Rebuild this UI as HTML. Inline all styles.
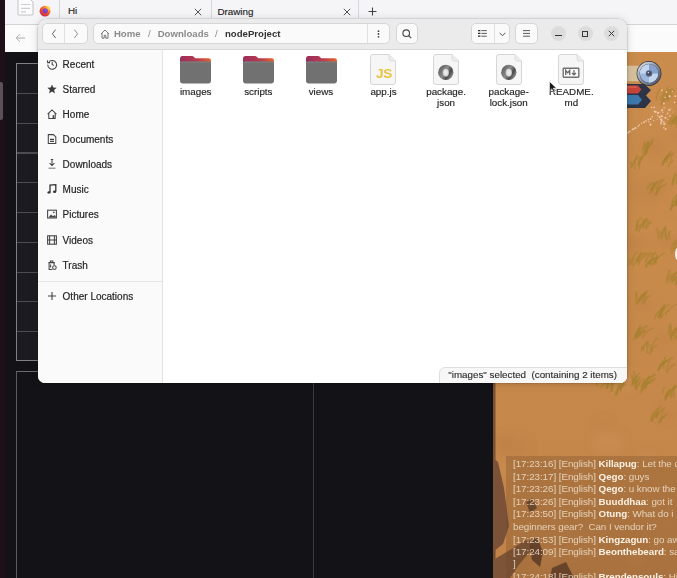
<!DOCTYPE html>
<html><head><meta charset="utf-8">
<style>
*{margin:0;padding:0;box-sizing:border-box}
html,body{width:677px;height:578px;overflow:hidden;background:#131317;font-family:"Liberation Sans",sans-serif;position:relative}
.a{position:absolute}
svg{position:absolute;overflow:visible}
#dock{left:0;top:0;width:5px;height:578px;background:#1e1018}
#tabbar{left:5px;top:0;width:672px;height:25.2px;background:#f5f5f7;border-bottom:1.2px solid #d4d4d8}
#toolbar{left:5px;top:25.2px;width:672px;height:26.6px;background:#fbfbfc}
#page{left:5px;top:52px;width:488px;height:526px;background:#131317}
#grid{left:15.6px;top:63px;width:400px;height:297.5px;background:#1b1b21;border:1.4px solid #808086}
.gl{left:0;width:100%;height:1.2px;background:#4c4c52}
#lowbox{left:15.6px;top:371px;width:500px;height:300px;border-left:1.2px solid #5a5a60;border-top:1.2px solid #6a6a70}
#vline{left:313px;top:371px;width:1px;height:207px;background:#3a3a40}
#game{left:493px;top:52px;width:184px;height:526px;background:#c6884b;overflow:hidden}
.tabtxt{font-size:9.8px;color:#1f1f1f;-webkit-text-stroke:.15px #1f1f1f;line-height:12px;white-space:nowrap}
#win{left:37.5px;top:18.7px;width:589px;height:364px;border-radius:9px 9px 7px 7px;overflow:hidden;background:#fff;box-shadow:0 0 10px rgba(0,0,0,.13),0 1px 4px rgba(0,0,0,.12),0 0 0 .6px rgba(0,0,0,.12)}
#hdr{left:0;top:0;width:589px;height:31px;background:#ebebeb;border-bottom:1px solid #d8d8d8}
#side{left:0;top:31px;width:125.2px;height:333px;background:#fafafa;border-right:1px solid #e2e2e2}
.btn{background:#fafafa;border:1px solid #d6d6d6;border-radius:5px}
.si{left:25.1px;font-size:10px;color:#242424;-webkit-text-stroke:.18px #242424;white-space:nowrap;line-height:12px}
.lbl{font-size:9.8px;color:#1e1e1e;-webkit-text-stroke:.15px #1e1e1e;text-align:center;line-height:11px;width:70px;white-space:nowrap}
.chat{left:513px;font-size:9.8px;color:rgba(238,226,206,.85);white-space:nowrap;line-height:12px;letter-spacing:-.05px}
.chat b{color:rgba(255,248,236,.95)}
.circ{width:15px;height:15px;border-radius:50%;background:#dcdcdc;top:7.5px}
</style></head><body>
<div id="dock" class="a"></div>
<div class="a" style="left:0;top:82px;width:2.5px;height:38px;background:#5a5058;border-radius:0 2px 2px 0"></div>
<div id="tabbar" class="a"></div>
<div id="toolbar" class="a"></div>
<div id="page" class="a"></div>
<div id="grid" class="a">
  <div class="a gl" style="top:28.8px"></div>
  <div class="a gl" style="top:58.6px"></div>
  <div class="a gl" style="top:88.4px"></div>
  <div class="a gl" style="top:118.2px"></div>
  <div class="a gl" style="top:148px"></div>
  <div class="a gl" style="top:177.8px"></div>
  <div class="a gl" style="top:207.5px"></div>
  <div class="a gl" style="top:237.2px"></div>
  <div class="a gl" style="top:266.6px"></div>
</div>
<div id="lowbox" class="a"></div>
<div id="vline" class="a"></div>

<!-- browser tab bar content -->
<svg style="left:17px;top:-3px" width="17" height="19" viewBox="0 0 17 19">
  <path d="M1 1 H12 L16 5 V17.5 Q16 18 15.5 18 H1.5 Q1 18 1 17.5 Z" fill="#fbfbfb" stroke="#c2c2c6" stroke-width="1"/>
  <path d="M4 7.5 H13 M4 11.3 H13 M4 14.8 H9" stroke="#cdcdd1" stroke-width="1.2"/>
</svg>
<svg style="left:39px;top:5.2px" width="12" height="12" viewBox="0 0 12 12">
  <defs><radialGradient id="ffx" cx=".75" cy=".2" r=".9"><stop offset="0" stop-color="#ffd23a"/><stop offset=".35" stop-color="#ff8a2a"/><stop offset=".7" stop-color="#e8432f"/><stop offset="1" stop-color="#c82a5a"/></radialGradient></defs>
  <circle cx="6" cy="6.2" r="5.4" fill="url(#ffx)"/>
  <path d="M8.6 0.6 Q11.6 2.6 11.2 5.2 L9 4 Z" fill="#ffcf40" opacity=".9"/>
  <circle cx="6.3" cy="5.8" r="2.6" fill="#7a3cc0"/>
  <circle cx="6.8" cy="5.2" r="1.3" fill="#9a58d8" opacity=".8"/>
</svg>
<div class="a" style="left:59px;top:0;width:1px;height:18px;background:#d6d6da"></div>
<div class="a tabtxt" style="left:68px;top:5.3px">Hi</div>
<svg style="left:194px;top:7.5px" width="8" height="8" viewBox="0 0 8 8"><path d="M0.8 0.8 L7.2 7.2 M7.2 0.8 L0.8 7.2" stroke="#555" stroke-width="1"/></svg>
<div class="a" style="left:211px;top:0;width:1px;height:18px;background:#d6d6da"></div>
<div class="a tabtxt" style="left:217.4px;top:5.8px">Drawing</div>
<svg style="left:343px;top:7.5px" width="8" height="8" viewBox="0 0 8 8"><path d="M0.8 0.8 L7.2 7.2 M7.2 0.8 L0.8 7.2" stroke="#555" stroke-width="1"/></svg>
<div class="a" style="left:358px;top:0;width:1px;height:18px;background:#d6d6da"></div>
<svg style="left:368px;top:6.5px" width="9" height="9" viewBox="0 0 9 9"><path d="M4.5 0.5 V8.5 M0.5 4.5 H8.5" stroke="#444" stroke-width="1.1"/></svg>
<svg style="left:15px;top:33px" width="11" height="10" viewBox="0 0 11 10"><path d="M10 5 H1.5 M5 1.2 L1.2 5 L5 8.8" fill="none" stroke="#a4a4a8" stroke-width=".9"/></svg>

<!-- game -->
<svg style="left:493px;top:52px;overflow:hidden" width="184" height="526" viewBox="493 52 184 526">
  <defs>
    <linearGradient id="gbg" x1="0" y1="0" x2="0" y2="1"><stop offset="0" stop-color="#c98c4d"/><stop offset=".5" stop-color="#c88a4b"/><stop offset="1" stop-color="#c3844a"/></linearGradient>
    <radialGradient id="cmp" cx=".45" cy=".4" r=".6"><stop offset="0" stop-color="#c4d6f0"/><stop offset="1" stop-color="#7c9cc8"/></radialGradient>
    <filter id="bl"><feGaussianBlur stdDeviation=".6"/></filter><filter id="bl2" x="-50%" y="-50%" width="200%" height="200%"><feGaussianBlur stdDeviation="5"/></filter>
  </defs>
  <rect x="493" y="52" width="184" height="526" fill="url(#gbg)"/>
  <g filter="url(#bl2)"><ellipse cx="608" cy="442" rx="16" ry="9" fill="#d29658" opacity=".35"/><ellipse cx="648" cy="460" rx="9" ry="5" fill="#d29658" opacity=".35"/><ellipse cx="659" cy="112" rx="12" ry="7" fill="#d29658" opacity=".35"/><ellipse cx="563" cy="106" rx="9" ry="5" fill="#d29658" opacity=".35"/><ellipse cx="568" cy="148" rx="16" ry="10" fill="#bb7c44" opacity=".35"/><ellipse cx="522" cy="471" rx="8" ry="5" fill="#bb7c44" opacity=".35"/><ellipse cx="516" cy="53" rx="16" ry="10" fill="#d29658" opacity=".35"/><ellipse cx="635" cy="557" rx="8" ry="5" fill="#d29658" opacity=".35"/><ellipse cx="546" cy="558" rx="12" ry="7" fill="#d29658" opacity=".35"/><ellipse cx="526" cy="561" rx="8" ry="5" fill="#bb7c44" opacity=".35"/><ellipse cx="548" cy="242" rx="8" ry="5" fill="#d29658" opacity=".35"/><ellipse cx="542" cy="227" rx="16" ry="9" fill="#d29658" opacity=".35"/><ellipse cx="603" cy="424" rx="7" ry="4" fill="#bb7c44" opacity=".35"/><ellipse cx="644" cy="305" rx="10" ry="6" fill="#bb7c44" opacity=".35"/><ellipse cx="580" cy="145" rx="9" ry="5" fill="#d29658" opacity=".35"/><ellipse cx="668" cy="240" rx="11" ry="7" fill="#bb7c44" opacity=".35"/><ellipse cx="560" cy="356" rx="6" ry="4" fill="#d29658" opacity=".35"/><ellipse cx="623" cy="380" rx="17" ry="10" fill="#d29658" opacity=".35"/><ellipse cx="632" cy="541" rx="17" ry="10" fill="#bb7c44" opacity=".35"/><ellipse cx="587" cy="522" rx="9" ry="5" fill="#bb7c44" opacity=".35"/><ellipse cx="513" cy="446" rx="16" ry="9" fill="#bb7c44" opacity=".35"/><ellipse cx="500" cy="549" rx="7" ry="4" fill="#bb7c44" opacity=".35"/><ellipse cx="587" cy="243" rx="8" ry="5" fill="#bb7c44" opacity=".35"/><ellipse cx="663" cy="339" rx="10" ry="6" fill="#bb7c44" opacity=".35"/><ellipse cx="549" cy="472" rx="14" ry="8" fill="#bb7c44" opacity=".35"/><ellipse cx="676" cy="137" rx="7" ry="4" fill="#bb7c44" opacity=".35"/><ellipse cx="499" cy="442" rx="10" ry="6" fill="#bb7c44" opacity=".35"/><ellipse cx="577" cy="274" rx="7" ry="4" fill="#d29658" opacity=".35"/><ellipse cx="641" cy="228" rx="8" ry="5" fill="#d29658" opacity=".35"/><ellipse cx="609" cy="466" rx="7" ry="4" fill="#bb7c44" opacity=".35"/><ellipse cx="562" cy="83" rx="11" ry="7" fill="#d29658" opacity=".35"/><ellipse cx="576" cy="578" rx="16" ry="10" fill="#bb7c44" opacity=".35"/><ellipse cx="670" cy="414" rx="10" ry="6" fill="#bb7c44" opacity=".35"/><ellipse cx="547" cy="264" rx="8" ry="5" fill="#bb7c44" opacity=".35"/><ellipse cx="644" cy="332" rx="8" ry="5" fill="#bb7c44" opacity=".35"/><ellipse cx="653" cy="147" rx="12" ry="7" fill="#bb7c44" opacity=".35"/><ellipse cx="505" cy="470" rx="10" ry="6" fill="#d29658" opacity=".35"/><ellipse cx="633" cy="243" rx="14" ry="9" fill="#bb7c44" opacity=".35"/><ellipse cx="647" cy="191" rx="18" ry="11" fill="#bb7c44" opacity=".35"/><ellipse cx="669" cy="231" rx="8" ry="5" fill="#d29658" opacity=".35"/></g>
  <g filter="url(#bl)"><path d="M661.0 100.0 Q662.6 93.4 671.9 89.1" stroke="#a6822f" stroke-width="1.7" fill="none" stroke-linecap="round" opacity=".55"/><path d="M667.6 99.3 Q668.6 94.1 674.3 90.6" stroke="#a6822f" stroke-width="1.2" fill="none" stroke-linecap="round" opacity=".55"/><path d="M667.2 101.0 Q667.9 97.4 671.6 95.0" stroke="#a6822f" stroke-width="2.1" fill="none" stroke-linecap="round" opacity=".55"/><path d="M664.3 101.1 Q665.7 93.9 673.4 89.1" stroke="#a6822f" stroke-width="1.6" fill="none" stroke-linecap="round" opacity=".55"/><path d="M661.3 104.7 Q662.2 99.4 667.2 95.9" stroke="#a6822f" stroke-width="1.8" fill="none" stroke-linecap="round" opacity=".55"/><path d="M667.3 98.2 Q667.3 92.1 667.3 88.0" stroke="#a6822f" stroke-width="2.0" fill="none" stroke-linecap="round" opacity=".55"/><path d="M656.2 99.1 Q656.8 93.1 659.8 89.0" stroke="#a6822f" stroke-width="1.4" fill="none" stroke-linecap="round" opacity=".55"/><path d="M664.0 101.3 Q664.0 94.8 663.9 90.5" stroke="#a6822f" stroke-width="1.4" fill="none" stroke-linecap="round" opacity=".55"/><path d="M668.9 123.9 Q669.7 118.6 674.4 115.0" stroke="#a6822f" stroke-width="1.5" fill="none" stroke-linecap="round" opacity=".55"/><path d="M669.8 123.8 Q671.1 119.5 678.5 116.7" stroke="#a6822f" stroke-width="1.7" fill="none" stroke-linecap="round" opacity=".55"/><path d="M671.8 123.4 Q673.0 119.3 679.4 116.5" stroke="#a6822f" stroke-width="1.4" fill="none" stroke-linecap="round" opacity=".55"/><path d="M676.6 126.9 Q676.8 123.9 678.0 121.9" stroke="#a6822f" stroke-width="1.8" fill="none" stroke-linecap="round" opacity=".55"/><path d="M674.3 124.0 Q675.6 119.7 683.5 116.8" stroke="#a6822f" stroke-width="1.3" fill="none" stroke-linecap="round" opacity=".55"/><path d="M676.0 124.4 Q676.9 117.9 682.1 113.5" stroke="#a6822f" stroke-width="2.0" fill="none" stroke-linecap="round" opacity=".55"/><path d="M679.2 121.7 Q680.3 118.0 686.6 115.5" stroke="#a6822f" stroke-width="1.4" fill="none" stroke-linecap="round" opacity=".55"/><path d="M673.1 121.1 Q673.7 118.0 677.2 115.9" stroke="#a6822f" stroke-width="1.9" fill="none" stroke-linecap="round" opacity=".55"/><path d="M670.9 126.4 Q671.8 122.7 677.1 120.3" stroke="#a6822f" stroke-width="1.2" fill="none" stroke-linecap="round" opacity=".55"/><path d="M672.2 123.5 Q673.9 117.7 684.0 113.9" stroke="#a6822f" stroke-width="1.4" fill="none" stroke-linecap="round" opacity=".55"/><path d="M674.7 123.1 Q675.9 118.4 682.7 115.2" stroke="#a6822f" stroke-width="1.3" fill="none" stroke-linecap="round" opacity=".55"/><path d="M645.1 150.0 Q645.0 145.3 644.4 142.1" stroke="#a6822f" stroke-width="1.3" fill="none" stroke-linecap="round" opacity=".55"/><path d="M646.1 154.3 Q647.0 147.2 652.6 142.4" stroke="#a6822f" stroke-width="1.7" fill="none" stroke-linecap="round" opacity=".55"/><path d="M645.0 154.7 Q645.7 149.5 649.6 146.0" stroke="#a6822f" stroke-width="1.2" fill="none" stroke-linecap="round" opacity=".55"/><path d="M644.5 153.9 Q645.6 147.5 651.9 143.3" stroke="#a6822f" stroke-width="1.8" fill="none" stroke-linecap="round" opacity=".55"/><path d="M647.1 152.1 Q647.2 145.5 647.8 141.1" stroke="#a6822f" stroke-width="1.7" fill="none" stroke-linecap="round" opacity=".55"/><path d="M645.3 153.4 Q645.7 150.3 647.7 148.3" stroke="#a6822f" stroke-width="2.2" fill="none" stroke-linecap="round" opacity=".55"/><path d="M642.3 152.2 Q643.2 146.5 648.6 142.6" stroke="#a6822f" stroke-width="1.8" fill="none" stroke-linecap="round" opacity=".55"/><path d="M645.1 150.8 Q646.4 143.8 653.5 139.1" stroke="#a6822f" stroke-width="1.3" fill="none" stroke-linecap="round" opacity=".55"/><path d="M643.1 148.7 Q643.3 145.6 644.3 143.5" stroke="#a6822f" stroke-width="1.3" fill="none" stroke-linecap="round" opacity=".55"/><path d="M663.5 163.8 Q664.1 159.4 667.7 156.5" stroke="#a6822f" stroke-width="1.4" fill="none" stroke-linecap="round" opacity=".55"/><path d="M664.0 161.3 Q664.9 156.7 670.2 153.6" stroke="#a6822f" stroke-width="1.8" fill="none" stroke-linecap="round" opacity=".55"/><path d="M662.6 165.0 Q664.0 158.3 672.3 153.9" stroke="#a6822f" stroke-width="2.0" fill="none" stroke-linecap="round" opacity=".55"/><path d="M662.1 163.2 Q662.8 160.0 666.8 157.8" stroke="#a6822f" stroke-width="1.4" fill="none" stroke-linecap="round" opacity=".55"/><path d="M670.5 161.8 Q671.1 155.8 674.2 151.9" stroke="#a6822f" stroke-width="1.2" fill="none" stroke-linecap="round" opacity=".55"/><path d="M666.7 162.2 Q667.3 155.4 670.6 150.9" stroke="#a6822f" stroke-width="1.7" fill="none" stroke-linecap="round" opacity=".55"/><path d="M668.6 166.6 Q669.2 163.2 672.5 160.9" stroke="#a6822f" stroke-width="1.7" fill="none" stroke-linecap="round" opacity=".55"/><path d="M649.7 192.9 Q650.8 187.7 656.7 184.2" stroke="#a6822f" stroke-width="1.3" fill="none" stroke-linecap="round" opacity=".55"/><path d="M655.8 194.8 Q656.4 190.3 659.8 187.4" stroke="#a6822f" stroke-width="2.2" fill="none" stroke-linecap="round" opacity=".55"/><path d="M647.3 188.5 Q648.2 185.2 653.2 183.0" stroke="#a6822f" stroke-width="2.0" fill="none" stroke-linecap="round" opacity=".55"/><path d="M651.4 192.3 Q652.1 189.3 656.0 187.2" stroke="#a6822f" stroke-width="1.6" fill="none" stroke-linecap="round" opacity=".55"/><path d="M652.2 190.7 Q652.7 186.0 655.6 182.9" stroke="#a6822f" stroke-width="1.2" fill="none" stroke-linecap="round" opacity=".55"/><path d="M651.2 189.7 Q652.8 183.8 662.0 179.8" stroke="#a6822f" stroke-width="1.9" fill="none" stroke-linecap="round" opacity=".55"/><path d="M651.5 189.7 Q652.3 185.0 657.0 182.0" stroke="#a6822f" stroke-width="1.8" fill="none" stroke-linecap="round" opacity=".55"/><path d="M657.6 188.6 Q658.5 183.6 663.6 180.2" stroke="#a6822f" stroke-width="1.9" fill="none" stroke-linecap="round" opacity=".55"/><path d="M656.7 193.5 Q658.1 187.8 666.2 184.1" stroke="#a6822f" stroke-width="1.9" fill="none" stroke-linecap="round" opacity=".55"/><path d="M676.2 204.7 Q677.0 197.9 681.6 193.3" stroke="#a6822f" stroke-width="1.8" fill="none" stroke-linecap="round" opacity=".55"/><path d="M677.9 209.7 Q678.0 202.6 678.6 197.8" stroke="#a6822f" stroke-width="1.5" fill="none" stroke-linecap="round" opacity=".55"/><path d="M671.7 205.7 Q672.3 202.1 675.7 199.7" stroke="#a6822f" stroke-width="1.3" fill="none" stroke-linecap="round" opacity=".55"/><path d="M671.6 209.6 Q672.5 203.5 677.3 199.4" stroke="#a6822f" stroke-width="1.3" fill="none" stroke-linecap="round" opacity=".55"/><path d="M679.5 207.9 Q679.9 204.1 682.2 201.5" stroke="#a6822f" stroke-width="1.8" fill="none" stroke-linecap="round" opacity=".55"/><path d="M676.2 204.8 Q676.9 197.8 680.9 193.2" stroke="#a6822f" stroke-width="1.5" fill="none" stroke-linecap="round" opacity=".55"/><path d="M678.1 204.1 Q678.5 198.2 680.8 194.3" stroke="#a6822f" stroke-width="1.8" fill="none" stroke-linecap="round" opacity=".55"/><path d="M671.3 205.7 Q672.3 198.7 677.9 194.1" stroke="#a6822f" stroke-width="1.6" fill="none" stroke-linecap="round" opacity=".55"/><path d="M675.4 205.0 Q675.8 201.2 678.3 198.7" stroke="#a6822f" stroke-width="1.5" fill="none" stroke-linecap="round" opacity=".55"/><path d="M670.3 209.7 Q671.0 206.6 675.2 204.5" stroke="#a6822f" stroke-width="2.1" fill="none" stroke-linecap="round" opacity=".55"/><path d="M676.5 203.1 Q676.6 198.0 677.2 194.6" stroke="#a6822f" stroke-width="1.8" fill="none" stroke-linecap="round" opacity=".55"/><path d="M636.1 229.8 Q636.2 226.4 637.0 224.1" stroke="#a6822f" stroke-width="1.7" fill="none" stroke-linecap="round" opacity=".55"/><path d="M646.7 228.6 Q647.3 225.0 650.8 222.6" stroke="#a6822f" stroke-width="2.0" fill="none" stroke-linecap="round" opacity=".55"/><path d="M642.4 226.3 Q642.6 222.6 644.0 220.0" stroke="#a6822f" stroke-width="1.8" fill="none" stroke-linecap="round" opacity=".55"/><path d="M638.7 231.6 Q640.1 225.1 647.8 220.7" stroke="#a6822f" stroke-width="2.1" fill="none" stroke-linecap="round" opacity=".55"/><path d="M636.2 230.1 Q636.9 226.7 640.7 224.5" stroke="#a6822f" stroke-width="1.9" fill="none" stroke-linecap="round" opacity=".55"/><path d="M645.1 227.3 Q645.7 224.1 649.0 221.9" stroke="#a6822f" stroke-width="1.8" fill="none" stroke-linecap="round" opacity=".55"/><path d="M643.4 229.3 Q643.7 222.9 645.5 218.7" stroke="#a6822f" stroke-width="1.5" fill="none" stroke-linecap="round" opacity=".55"/><path d="M640.2 228.1 Q641.4 222.5 647.7 218.7" stroke="#a6822f" stroke-width="1.3" fill="none" stroke-linecap="round" opacity=".55"/><path d="M636.8 229.6 Q636.9 223.7 637.1 219.8" stroke="#a6822f" stroke-width="1.5" fill="none" stroke-linecap="round" opacity=".55"/><path d="M636.7 226.3 Q637.4 221.2 641.5 217.8" stroke="#a6822f" stroke-width="1.9" fill="none" stroke-linecap="round" opacity=".55"/><path d="M660.8 238.5 Q660.7 234.5 660.4 231.8" stroke="#a6822f" stroke-width="1.4" fill="none" stroke-linecap="round" opacity=".55"/><path d="M669.4 239.0 Q669.4 234.6 669.1 231.7" stroke="#a6822f" stroke-width="1.7" fill="none" stroke-linecap="round" opacity=".55"/><path d="M666.7 240.2 Q667.3 234.6 670.7 230.8" stroke="#a6822f" stroke-width="1.2" fill="none" stroke-linecap="round" opacity=".55"/><path d="M662.4 239.3 Q662.8 232.7 664.7 228.3" stroke="#a6822f" stroke-width="1.2" fill="none" stroke-linecap="round" opacity=".55"/><path d="M661.4 236.4 Q662.0 230.5 665.5 226.6" stroke="#a6822f" stroke-width="1.8" fill="none" stroke-linecap="round" opacity=".55"/><path d="M665.2 236.8 Q665.2 232.5 664.9 229.6" stroke="#a6822f" stroke-width="1.7" fill="none" stroke-linecap="round" opacity=".55"/><path d="M666.4 238.6 Q666.2 231.7 665.3 227.2" stroke="#a6822f" stroke-width="1.5" fill="none" stroke-linecap="round" opacity=".55"/><path d="M658.3 238.6 Q658.2 232.5 657.4 228.4" stroke="#a6822f" stroke-width="2.2" fill="none" stroke-linecap="round" opacity=".55"/><path d="M646.5 267.0 Q647.8 261.7 655.3 258.1" stroke="#a6822f" stroke-width="1.9" fill="none" stroke-linecap="round" opacity=".55"/><path d="M654.6 262.5 Q655.1 259.2 657.9 257.0" stroke="#a6822f" stroke-width="1.4" fill="none" stroke-linecap="round" opacity=".55"/><path d="M650.5 265.7 Q650.8 261.2 652.6 258.2" stroke="#a6822f" stroke-width="1.2" fill="none" stroke-linecap="round" opacity=".55"/><path d="M649.1 264.1 Q649.8 261.0 653.6 258.9" stroke="#a6822f" stroke-width="1.4" fill="none" stroke-linecap="round" opacity=".55"/><path d="M645.3 266.5 Q646.7 261.3 655.0 257.8" stroke="#a6822f" stroke-width="1.7" fill="none" stroke-linecap="round" opacity=".55"/><path d="M645.5 261.7 Q646.5 256.9 652.2 253.7" stroke="#a6822f" stroke-width="2.0" fill="none" stroke-linecap="round" opacity=".55"/><path d="M653.0 264.6 Q653.6 260.5 657.2 257.8" stroke="#a6822f" stroke-width="1.6" fill="none" stroke-linecap="round" opacity=".55"/><path d="M649.9 261.9 Q650.7 256.6 655.5 253.1" stroke="#a6822f" stroke-width="1.2" fill="none" stroke-linecap="round" opacity=".55"/><path d="M653.9 264.1 Q655.4 257.7 664.0 253.5" stroke="#a6822f" stroke-width="1.9" fill="none" stroke-linecap="round" opacity=".55"/><path d="M655.9 262.6 Q656.1 258.0 657.0 254.9" stroke="#a6822f" stroke-width="1.9" fill="none" stroke-linecap="round" opacity=".55"/><path d="M651.0 264.0 Q651.6 256.8 655.3 252.1" stroke="#a6822f" stroke-width="1.4" fill="none" stroke-linecap="round" opacity=".55"/><path d="M671.8 278.4 Q673.0 273.8 679.5 270.8" stroke="#a6822f" stroke-width="1.7" fill="none" stroke-linecap="round" opacity=".55"/><path d="M671.5 280.7 Q672.6 275.1 678.7 271.3" stroke="#a6822f" stroke-width="1.9" fill="none" stroke-linecap="round" opacity=".55"/><path d="M676.4 283.3 Q676.8 278.7 679.3 275.6" stroke="#a6822f" stroke-width="2.0" fill="none" stroke-linecap="round" opacity=".55"/><path d="M675.5 284.5 Q676.5 280.7 682.2 278.1" stroke="#a6822f" stroke-width="2.1" fill="none" stroke-linecap="round" opacity=".55"/><path d="M666.9 280.2 Q667.3 274.5 669.4 270.7" stroke="#a6822f" stroke-width="2.0" fill="none" stroke-linecap="round" opacity=".55"/><path d="M669.2 282.8 Q669.5 278.5 671.6 275.7" stroke="#a6822f" stroke-width="1.4" fill="none" stroke-linecap="round" opacity=".55"/><path d="M672.0 283.0 Q672.8 279.1 677.6 276.5" stroke="#a6822f" stroke-width="1.5" fill="none" stroke-linecap="round" opacity=".55"/><path d="M673.8 280.6 Q674.0 276.8 675.5 274.2" stroke="#a6822f" stroke-width="1.3" fill="none" stroke-linecap="round" opacity=".55"/><path d="M674.4 280.9 Q675.3 277.4 680.7 275.0" stroke="#a6822f" stroke-width="1.9" fill="none" stroke-linecap="round" opacity=".55"/><path d="M666.3 283.1 Q667.1 277.6 671.7 273.9" stroke="#a6822f" stroke-width="1.7" fill="none" stroke-linecap="round" opacity=".55"/><path d="M677.5 280.6 Q678.7 274.9 685.2 271.2" stroke="#a6822f" stroke-width="1.6" fill="none" stroke-linecap="round" opacity=".55"/><path d="M639.3 302.5 Q640.1 296.5 644.8 292.5" stroke="#a6822f" stroke-width="1.6" fill="none" stroke-linecap="round" opacity=".55"/><path d="M636.8 304.0 Q638.2 297.2 646.1 292.7" stroke="#a6822f" stroke-width="2.0" fill="none" stroke-linecap="round" opacity=".55"/><path d="M644.8 303.2 Q644.9 298.8 645.4 295.8" stroke="#a6822f" stroke-width="1.2" fill="none" stroke-linecap="round" opacity=".55"/><path d="M637.3 302.8 Q638.3 298.6 644.1 295.8" stroke="#a6822f" stroke-width="1.7" fill="none" stroke-linecap="round" opacity=".55"/><path d="M636.4 298.1 Q636.5 294.4 636.8 292.0" stroke="#a6822f" stroke-width="1.8" fill="none" stroke-linecap="round" opacity=".55"/><path d="M636.0 302.5 Q636.1 296.9 636.3 293.1" stroke="#a6822f" stroke-width="1.3" fill="none" stroke-linecap="round" opacity=".55"/><path d="M642.4 299.5 Q643.0 296.4 646.3 294.3" stroke="#a6822f" stroke-width="1.4" fill="none" stroke-linecap="round" opacity=".55"/><path d="M640.8 299.7 Q641.7 294.9 647.0 291.7" stroke="#a6822f" stroke-width="2.1" fill="none" stroke-linecap="round" opacity=".55"/><path d="M642.4 303.7 Q643.5 299.0 649.8 295.9" stroke="#a6822f" stroke-width="2.0" fill="none" stroke-linecap="round" opacity=".55"/><path d="M659.0 318.0 Q659.5 314.8 662.1 312.7" stroke="#a6822f" stroke-width="2.0" fill="none" stroke-linecap="round" opacity=".55"/><path d="M659.8 314.3 Q661.2 308.6 669.3 304.8" stroke="#a6822f" stroke-width="1.5" fill="none" stroke-linecap="round" opacity=".55"/><path d="M659.7 315.8 Q660.4 309.4 664.6 305.1" stroke="#a6822f" stroke-width="1.6" fill="none" stroke-linecap="round" opacity=".55"/><path d="M659.9 315.8 Q660.7 309.0 665.2 304.4" stroke="#a6822f" stroke-width="1.3" fill="none" stroke-linecap="round" opacity=".55"/><path d="M661.0 317.4 Q661.5 311.0 664.2 306.7" stroke="#a6822f" stroke-width="1.9" fill="none" stroke-linecap="round" opacity=".55"/><path d="M657.7 316.7 Q658.7 312.6 663.9 309.8" stroke="#a6822f" stroke-width="2.1" fill="none" stroke-linecap="round" opacity=".55"/><path d="M654.6 319.2 Q655.7 312.7 662.2 308.4" stroke="#a6822f" stroke-width="1.3" fill="none" stroke-linecap="round" opacity=".55"/><path d="M665.7 315.5 Q667.2 308.8 676.2 304.3" stroke="#a6822f" stroke-width="1.2" fill="none" stroke-linecap="round" opacity=".55"/><path d="M661.5 318.3 Q662.7 313.4 669.5 310.2" stroke="#a6822f" stroke-width="1.2" fill="none" stroke-linecap="round" opacity=".55"/><path d="M668.4 334.5 Q668.7 327.9 670.3 323.4" stroke="#a6822f" stroke-width="1.9" fill="none" stroke-linecap="round" opacity=".55"/><path d="M670.8 337.6 Q671.5 332.7 675.7 329.4" stroke="#a6822f" stroke-width="1.7" fill="none" stroke-linecap="round" opacity=".55"/><path d="M672.5 335.0 Q673.5 329.5 679.1 325.8" stroke="#a6822f" stroke-width="1.9" fill="none" stroke-linecap="round" opacity=".55"/><path d="M673.8 335.3 Q675.0 328.6 682.0 324.1" stroke="#a6822f" stroke-width="1.3" fill="none" stroke-linecap="round" opacity=".55"/><path d="M676.2 338.4 Q677.4 332.6 684.5 328.7" stroke="#a6822f" stroke-width="2.1" fill="none" stroke-linecap="round" opacity=".55"/><path d="M671.0 340.0 Q671.2 335.6 672.5 332.7" stroke="#a6822f" stroke-width="2.2" fill="none" stroke-linecap="round" opacity=".55"/><path d="M670.0 335.8 Q670.1 330.1 670.9 326.4" stroke="#a6822f" stroke-width="1.5" fill="none" stroke-linecap="round" opacity=".55"/><path d="M677.5 337.3 Q678.6 331.2 684.4 327.1" stroke="#a6822f" stroke-width="2.1" fill="none" stroke-linecap="round" opacity=".55"/><path d="M678.7 338.8 Q679.3 331.7 682.9 326.9" stroke="#a6822f" stroke-width="1.9" fill="none" stroke-linecap="round" opacity=".55"/><path d="M674.2 339.8 Q674.6 334.0 676.8 330.2" stroke="#a6822f" stroke-width="1.9" fill="none" stroke-linecap="round" opacity=".55"/><path d="M671.5 333.9 Q671.5 329.3 671.2 326.2" stroke="#a6822f" stroke-width="1.2" fill="none" stroke-linecap="round" opacity=".55"/><path d="M641.3 351.3 Q641.5 348.0 642.1 345.8" stroke="#a6822f" stroke-width="1.4" fill="none" stroke-linecap="round" opacity=".55"/><path d="M647.0 352.6 Q647.2 345.9 648.1 341.5" stroke="#a6822f" stroke-width="2.0" fill="none" stroke-linecap="round" opacity=".55"/><path d="M651.4 351.9 Q651.2 347.7 649.9 344.9" stroke="#a6822f" stroke-width="1.6" fill="none" stroke-linecap="round" opacity=".55"/><path d="M649.5 354.1 Q650.5 349.2 655.9 345.9" stroke="#a6822f" stroke-width="2.1" fill="none" stroke-linecap="round" opacity=".55"/><path d="M643.2 350.4 Q643.8 345.2 647.5 341.7" stroke="#a6822f" stroke-width="1.8" fill="none" stroke-linecap="round" opacity=".55"/><path d="M642.5 349.1 Q643.0 345.7 646.2 343.5" stroke="#a6822f" stroke-width="1.4" fill="none" stroke-linecap="round" opacity=".55"/><path d="M651.6 348.3 Q652.5 342.0 657.4 337.8" stroke="#a6822f" stroke-width="1.7" fill="none" stroke-linecap="round" opacity=".55"/><path d="M658.1 370.0 Q659.5 364.7 667.3 361.1" stroke="#a6822f" stroke-width="2.0" fill="none" stroke-linecap="round" opacity=".55"/><path d="M663.5 367.2 Q663.8 361.0 665.6 356.9" stroke="#a6822f" stroke-width="2.1" fill="none" stroke-linecap="round" opacity=".55"/><path d="M659.7 367.8 Q660.2 363.9 663.2 361.3" stroke="#a6822f" stroke-width="2.0" fill="none" stroke-linecap="round" opacity=".55"/><path d="M666.3 371.2 Q666.8 365.2 670.0 361.1" stroke="#a6822f" stroke-width="1.5" fill="none" stroke-linecap="round" opacity=".55"/><path d="M659.7 369.0 Q661.6 362.4 673.0 357.9" stroke="#a6822f" stroke-width="1.3" fill="none" stroke-linecap="round" opacity=".55"/><path d="M667.6 372.4 Q668.6 367.5 674.7 364.2" stroke="#a6822f" stroke-width="2.0" fill="none" stroke-linecap="round" opacity=".55"/><path d="M658.2 370.3 Q660.1 363.2 670.9 358.4" stroke="#a6822f" stroke-width="2.1" fill="none" stroke-linecap="round" opacity=".55"/><path d="M640.7 392.3 Q642.5 385.4 652.8 380.8" stroke="#a6822f" stroke-width="2.1" fill="none" stroke-linecap="round" opacity=".55"/><path d="M641.4 386.1 Q643.3 379.8 654.2 375.7" stroke="#a6822f" stroke-width="1.7" fill="none" stroke-linecap="round" opacity=".55"/><path d="M642.7 386.0 Q644.5 379.3 655.1 374.8" stroke="#a6822f" stroke-width="2.2" fill="none" stroke-linecap="round" opacity=".55"/><path d="M645.5 386.6 Q647.0 381.9 655.2 378.8" stroke="#a6822f" stroke-width="2.1" fill="none" stroke-linecap="round" opacity=".55"/><path d="M643.5 389.4 Q644.3 385.3 648.8 382.6" stroke="#a6822f" stroke-width="1.8" fill="none" stroke-linecap="round" opacity=".55"/><path d="M645.7 388.1 Q646.2 381.2 649.2 376.6" stroke="#a6822f" stroke-width="2.1" fill="none" stroke-linecap="round" opacity=".55"/><path d="M641.8 389.9 Q642.8 383.7 647.9 379.5" stroke="#a6822f" stroke-width="1.9" fill="none" stroke-linecap="round" opacity=".55"/><path d="M662.6 393.6 Q662.8 389.7 664.1 387.1" stroke="#a6822f" stroke-width="1.5" fill="none" stroke-linecap="round" opacity=".55"/><path d="M665.5 398.9 Q666.2 393.1 670.2 389.3" stroke="#a6822f" stroke-width="2.0" fill="none" stroke-linecap="round" opacity=".55"/><path d="M670.2 395.2 Q671.3 389.6 677.6 385.9" stroke="#a6822f" stroke-width="1.7" fill="none" stroke-linecap="round" opacity=".55"/><path d="M671.0 397.4 Q671.5 390.5 674.0 385.9" stroke="#a6822f" stroke-width="1.9" fill="none" stroke-linecap="round" opacity=".55"/><path d="M673.7 396.7 Q673.8 389.9 674.5 385.4" stroke="#a6822f" stroke-width="1.9" fill="none" stroke-linecap="round" opacity=".55"/><path d="M665.2 398.3 Q665.8 393.5 669.6 390.3" stroke="#a6822f" stroke-width="1.4" fill="none" stroke-linecap="round" opacity=".55"/><path d="M665.1 399.1 Q666.0 393.4 671.3 389.6" stroke="#a6822f" stroke-width="1.3" fill="none" stroke-linecap="round" opacity=".55"/><path d="M665.5 399.8 Q666.1 395.9 669.1 393.4" stroke="#a6822f" stroke-width="1.9" fill="none" stroke-linecap="round" opacity=".55"/><path d="M668.1 396.9 Q669.6 389.8 677.9 385.1" stroke="#a6822f" stroke-width="1.4" fill="none" stroke-linecap="round" opacity=".55"/><path d="M661.0 421.9 Q661.8 417.3 666.6 414.2" stroke="#a6822f" stroke-width="1.4" fill="none" stroke-linecap="round" opacity=".55"/><path d="M651.3 421.0 Q652.2 413.9 657.3 409.2" stroke="#a6822f" stroke-width="2.1" fill="none" stroke-linecap="round" opacity=".55"/><path d="M656.9 417.8 Q658.1 411.8 664.7 407.8" stroke="#a6822f" stroke-width="1.6" fill="none" stroke-linecap="round" opacity=".55"/><path d="M652.4 421.1 Q653.2 417.2 657.6 414.5" stroke="#a6822f" stroke-width="1.5" fill="none" stroke-linecap="round" opacity=".55"/><path d="M660.5 419.7 Q661.0 414.6 663.4 411.1" stroke="#a6822f" stroke-width="1.4" fill="none" stroke-linecap="round" opacity=".55"/><path d="M659.7 422.0 Q660.4 418.6 664.2 416.3" stroke="#a6822f" stroke-width="2.1" fill="none" stroke-linecap="round" opacity=".55"/><path d="M651.1 420.1 Q651.7 415.7 655.6 412.9" stroke="#a6822f" stroke-width="2.1" fill="none" stroke-linecap="round" opacity=".55"/><path d="M656.3 416.2 Q656.9 413.0 660.5 410.9" stroke="#a6822f" stroke-width="2.0" fill="none" stroke-linecap="round" opacity=".55"/><path d="M655.8 417.3 Q656.6 410.2 661.3 405.6" stroke="#a6822f" stroke-width="1.5" fill="none" stroke-linecap="round" opacity=".55"/><path d="M658.4 422.9 Q659.4 419.3 664.9 416.8" stroke="#a6822f" stroke-width="1.6" fill="none" stroke-linecap="round" opacity=".55"/><path d="M635.6 385.7 Q636.1 382.2 638.7 379.9" stroke="#a6822f" stroke-width="1.8" fill="none" stroke-linecap="round" opacity=".55"/><path d="M635.9 383.7 Q635.6 376.6 633.9 371.8" stroke="#a6822f" stroke-width="2.2" fill="none" stroke-linecap="round" opacity=".55"/><path d="M635.6 385.4 Q636.3 380.7 640.2 377.6" stroke="#a6822f" stroke-width="1.5" fill="none" stroke-linecap="round" opacity=".55"/><path d="M635.7 389.4 Q636.2 386.2 639.1 384.0" stroke="#a6822f" stroke-width="2.1" fill="none" stroke-linecap="round" opacity=".55"/><path d="M632.9 384.0 Q632.8 378.9 631.9 375.4" stroke="#a6822f" stroke-width="2.0" fill="none" stroke-linecap="round" opacity=".55"/><path d="M631.5 385.9 Q631.9 381.0 634.0 377.7" stroke="#a6822f" stroke-width="1.5" fill="none" stroke-linecap="round" opacity=".55"/><path d="M633.4 383.4 Q634.2 379.4 638.7 376.7" stroke="#a6822f" stroke-width="2.0" fill="none" stroke-linecap="round" opacity=".55"/><path d="M634.9 387.0 Q635.0 383.0 635.4 380.3" stroke="#a6822f" stroke-width="1.8" fill="none" stroke-linecap="round" opacity=".55"/><path d="M632.7 384.6 Q633.7 377.7 639.6 373.1" stroke="#a6822f" stroke-width="1.6" fill="none" stroke-linecap="round" opacity=".55"/><path d="M636.7 389.2 Q637.8 382.5 644.2 378.1" stroke="#a6822f" stroke-width="1.5" fill="none" stroke-linecap="round" opacity=".55"/><path d="M612.4 391.1 Q612.7 384.1 614.5 379.4" stroke="#a6822f" stroke-width="1.5" fill="none" stroke-linecap="round" opacity=".55"/><path d="M617.0 394.4 Q618.0 387.4 623.9 382.7" stroke="#a6822f" stroke-width="2.0" fill="none" stroke-linecap="round" opacity=".55"/><path d="M620.7 390.3 Q621.0 386.4 623.1 383.7" stroke="#a6822f" stroke-width="2.0" fill="none" stroke-linecap="round" opacity=".55"/><path d="M610.7 391.8 Q611.2 384.9 614.1 380.3" stroke="#a6822f" stroke-width="1.8" fill="none" stroke-linecap="round" opacity=".55"/><path d="M615.4 394.8 Q616.2 389.6 620.7 386.2" stroke="#a6822f" stroke-width="2.1" fill="none" stroke-linecap="round" opacity=".55"/><path d="M618.0 389.0 Q618.9 382.6 623.5 378.4" stroke="#a6822f" stroke-width="2.2" fill="none" stroke-linecap="round" opacity=".55"/><path d="M620.6 391.5 Q620.9 386.7 623.2 383.5" stroke="#a6822f" stroke-width="1.5" fill="none" stroke-linecap="round" opacity=".55"/><path d="M611.5 389.2 Q611.7 383.1 612.8 379.1" stroke="#a6822f" stroke-width="1.8" fill="none" stroke-linecap="round" opacity=".55"/><path d="M616.2 393.1 Q617.7 387.8 626.0 384.2" stroke="#a6822f" stroke-width="1.5" fill="none" stroke-linecap="round" opacity=".55"/><path d="M607.0 388.1 Q607.2 381.9 608.6 377.8" stroke="#a6822f" stroke-width="2.0" fill="none" stroke-linecap="round" opacity=".55"/><path d="M606.2 388.4 Q607.1 382.1 612.3 377.8" stroke="#a6822f" stroke-width="1.3" fill="none" stroke-linecap="round" opacity=".55"/><path d="M607.8 387.2 Q607.9 383.1 608.7 380.3" stroke="#a6822f" stroke-width="2.1" fill="none" stroke-linecap="round" opacity=".55"/><path d="M596.4 385.4 Q597.3 378.4 602.7 373.7" stroke="#a6822f" stroke-width="2.1" fill="none" stroke-linecap="round" opacity=".55"/><path d="M601.6 387.3 Q602.4 384.0 607.4 381.7" stroke="#a6822f" stroke-width="2.0" fill="none" stroke-linecap="round" opacity=".55"/><path d="M604.2 383.8 Q604.6 379.5 606.5 376.6" stroke="#a6822f" stroke-width="1.2" fill="none" stroke-linecap="round" opacity=".55"/><path d="M607.5 388.3 Q608.9 382.9 616.7 379.3" stroke="#a6822f" stroke-width="1.7" fill="none" stroke-linecap="round" opacity=".55"/><path d="M676.3 183.5 Q676.6 176.4 678.4 171.7" stroke="#a6822f" stroke-width="1.9" fill="none" stroke-linecap="round" opacity=".55"/><path d="M679.4 183.6 Q679.8 179.1 682.5 176.1" stroke="#a6822f" stroke-width="2.0" fill="none" stroke-linecap="round" opacity=".55"/><path d="M673.0 181.4 Q674.2 175.7 680.8 172.0" stroke="#a6822f" stroke-width="1.4" fill="none" stroke-linecap="round" opacity=".55"/><path d="M678.0 179.5 Q678.4 175.9 680.5 173.4" stroke="#a6822f" stroke-width="1.8" fill="none" stroke-linecap="round" opacity=".55"/><path d="M677.7 184.6 Q678.1 180.9 680.6 178.5" stroke="#a6822f" stroke-width="1.7" fill="none" stroke-linecap="round" opacity=".55"/><path d="M673.1 184.4 Q673.3 180.8 674.2 178.4" stroke="#a6822f" stroke-width="1.2" fill="none" stroke-linecap="round" opacity=".55"/><path d="M677.7 182.6 Q678.6 178.7 683.7 176.0" stroke="#a6822f" stroke-width="1.8" fill="none" stroke-linecap="round" opacity=".55"/><path d="M672.4 184.6 Q672.8 178.0 675.0 173.6" stroke="#a6822f" stroke-width="2.1" fill="none" stroke-linecap="round" opacity=".55"/><path d="M631.4 264.7 Q631.8 260.5 634.3 257.7" stroke="#a6822f" stroke-width="1.6" fill="none" stroke-linecap="round" opacity=".55"/><path d="M638.4 264.2 Q640.1 257.5 649.3 253.1" stroke="#a6822f" stroke-width="2.1" fill="none" stroke-linecap="round" opacity=".55"/><path d="M628.4 265.5 Q628.7 261.5 630.5 258.8" stroke="#a6822f" stroke-width="1.7" fill="none" stroke-linecap="round" opacity=".55"/><path d="M638.1 261.5 Q638.6 256.0 641.7 252.4" stroke="#a6822f" stroke-width="1.8" fill="none" stroke-linecap="round" opacity=".55"/><path d="M636.9 260.3 Q637.3 257.2 639.7 255.1" stroke="#a6822f" stroke-width="1.7" fill="none" stroke-linecap="round" opacity=".55"/><path d="M633.1 265.9 Q634.1 262.3 639.7 259.8" stroke="#a6822f" stroke-width="1.6" fill="none" stroke-linecap="round" opacity=".55"/><path d="M636.2 261.6 Q637.7 256.4 645.9 252.9" stroke="#a6822f" stroke-width="1.7" fill="none" stroke-linecap="round" opacity=".55"/><path d="M632.1 260.8 Q632.9 255.5 637.2 251.9" stroke="#a6822f" stroke-width="1.5" fill="none" stroke-linecap="round" opacity=".55"/><path d="M673.4 248.1 Q674.1 244.1 678.0 241.4" stroke="#a6822f" stroke-width="1.9" fill="none" stroke-linecap="round" opacity=".55"/><path d="M670.8 250.3 Q671.6 244.3 676.3 240.2" stroke="#a6822f" stroke-width="1.4" fill="none" stroke-linecap="round" opacity=".55"/><path d="M678.5 251.1 Q679.6 245.1 685.4 241.2" stroke="#a6822f" stroke-width="2.0" fill="none" stroke-linecap="round" opacity=".55"/><path d="M676.1 254.8 Q677.7 248.4 686.4 244.1" stroke="#a6822f" stroke-width="1.7" fill="none" stroke-linecap="round" opacity=".55"/><path d="M677.3 250.6 Q678.3 247.3 683.6 245.1" stroke="#a6822f" stroke-width="2.0" fill="none" stroke-linecap="round" opacity=".55"/><path d="M679.2 254.0 Q680.9 248.7 690.4 245.2" stroke="#a6822f" stroke-width="1.7" fill="none" stroke-linecap="round" opacity=".55"/><path d="M681.8 248.6 Q682.7 244.0 687.9 240.9" stroke="#a6822f" stroke-width="2.0" fill="none" stroke-linecap="round" opacity=".55"/><path d="M676.2 253.5 Q677.3 249.0 683.2 245.9" stroke="#a6822f" stroke-width="2.0" fill="none" stroke-linecap="round" opacity=".55"/><path d="M677.2 248.1 Q677.4 242.4 678.8 238.5" stroke="#a6822f" stroke-width="1.5" fill="none" stroke-linecap="round" opacity=".55"/><path d="M671.4 253.3 Q672.3 249.6 677.3 247.2" stroke="#a6822f" stroke-width="1.3" fill="none" stroke-linecap="round" opacity=".55"/><path d="M638.1 166.0 Q639.1 158.9 644.8 154.2" stroke="#a6822f" stroke-width="1.4" fill="none" stroke-linecap="round" opacity=".55"/><path d="M632.4 166.1 Q633.4 160.7 638.6 157.1" stroke="#a6822f" stroke-width="1.9" fill="none" stroke-linecap="round" opacity=".55"/><path d="M634.9 163.2 Q635.2 158.2 637.3 154.9" stroke="#a6822f" stroke-width="1.8" fill="none" stroke-linecap="round" opacity=".55"/><path d="M631.7 167.6 Q631.6 164.5 631.1 162.5" stroke="#a6822f" stroke-width="1.9" fill="none" stroke-linecap="round" opacity=".55"/><path d="M638.8 163.9 Q639.4 160.1 643.1 157.5" stroke="#a6822f" stroke-width="2.1" fill="none" stroke-linecap="round" opacity=".55"/><path d="M639.1 169.0 Q639.3 163.9 640.4 160.4" stroke="#a6822f" stroke-width="1.6" fill="none" stroke-linecap="round" opacity=".55"/><path d="M638.6 163.5 Q639.5 158.0 644.7 154.3" stroke="#a6822f" stroke-width="1.7" fill="none" stroke-linecap="round" opacity=".55"/><path d="M635.1 169.6 Q635.1 166.4 635.4 164.3" stroke="#a6822f" stroke-width="1.3" fill="none" stroke-linecap="round" opacity=".55"/><path d="M639.6 336.2 Q640.4 332.9 644.4 330.7" stroke="#a6822f" stroke-width="2.0" fill="none" stroke-linecap="round" opacity=".55"/><path d="M636.2 338.0 Q636.5 332.8 638.4 329.3" stroke="#a6822f" stroke-width="2.1" fill="none" stroke-linecap="round" opacity=".55"/><path d="M635.7 336.4 Q637.5 330.2 647.2 326.0" stroke="#a6822f" stroke-width="2.1" fill="none" stroke-linecap="round" opacity=".55"/><path d="M636.4 338.9 Q637.1 335.3 641.0 332.9" stroke="#a6822f" stroke-width="1.6" fill="none" stroke-linecap="round" opacity=".55"/><path d="M642.4 338.1 Q643.9 332.3 652.4 328.4" stroke="#a6822f" stroke-width="1.5" fill="none" stroke-linecap="round" opacity=".55"/><path d="M637.3 333.7 Q637.7 329.2 640.1 326.3" stroke="#a6822f" stroke-width="1.9" fill="none" stroke-linecap="round" opacity=".55"/><path d="M633.6 339.4 Q634.4 333.9 639.4 330.2" stroke="#a6822f" stroke-width="1.3" fill="none" stroke-linecap="round" opacity=".55"/><path d="M637.4 336.9 Q638.5 333.3 644.7 330.9" stroke="#a6822f" stroke-width="1.6" fill="none" stroke-linecap="round" opacity=".55"/><path d="M637.2 335.0 Q637.7 330.4 640.7 327.4" stroke="#a6822f" stroke-width="2.1" fill="none" stroke-linecap="round" opacity=".55"/></g>
  <!-- top hud -->
  <rect x="620" y="65.7" width="20" height="15.6" fill="#d6c09c"/>
  <path d="M620 84 H644 L651 90 L646 95.5 L651 101 L645 108 H620 Z" fill="#2e3448"/>
  <path d="M620 85.6 H638 L641.5 89.5 L638 93.4 H620 Z" fill="#c8443a"/>
  <path d="M620 86 H636 L637.5 88 H620Z" fill="#e06a55" opacity=".6"/>
  <path d="M620 95 H638 L642 99.8 L638 104.6 H620 Z" fill="#3c78ae"/>
  <circle cx="649" cy="73.5" r="12.4" fill="#2a303c"/>
  <defs><linearGradient id="sil" x1="0" y1="0" x2="1" y2="1"><stop offset="0" stop-color="#e0e4ea"/><stop offset=".5" stop-color="#8a92a2"/><stop offset="1" stop-color="#4a5060"/></linearGradient></defs>
  <circle cx="649" cy="73.5" r="10.6" fill="none" stroke="url(#sil)" stroke-width="2.2"/>
  <circle cx="649" cy="73.5" r="9.2" fill="#9cb6de"/>
  <path d="M649 73.5 L649 64.3 A9.2 9.2 0 0 0 639.8 73.5 Z M649 73.5 L649 82.7 A9.2 9.2 0 0 0 658.2 73.5 Z" fill="#c4d6ee"/>
  <path d="M649 73.5 L658.2 73.5 A9.2 9.2 0 0 0 649 64.3 Z" fill="#86a2cc"/>
  <circle cx="649" cy="73.5" r="3.2" fill="#56627a"/>
  <circle cx="649" cy="73.5" r="1.8" fill="#3a4456"/>
  <circle cx="648.4" cy="72.8" r=".8" fill="#dfe6f2"/>
  <g fill="#f2cdb4" opacity=".9"><circle cx="625.9" cy="134.1" r="1.1"/><circle cx="628.0" cy="132.7" r="0.9"/><circle cx="629.6" cy="131.4" r="1.0"/><circle cx="632.4" cy="129.6" r="0.8"/><circle cx="633.5" cy="129.1" r="1.0"/><circle cx="635.5" cy="128.0" r="1.1"/><circle cx="638.2" cy="126.3" r="0.8"/><circle cx="639.4" cy="124.9" r="0.7"/><circle cx="641.6" cy="123.2" r="0.7"/><circle cx="644.0" cy="122.2" r="1.0"/><circle cx="646.0" cy="121.1" r="0.9"/><circle cx="648.2" cy="119.6" r="0.8"/><circle cx="650.6" cy="118.9" r="1.0"/><circle cx="652.2" cy="116.8" r="0.8"/><circle cx="659.4" cy="117.2" r="1.0"/><circle cx="649.0" cy="121.8" r="0.7"/><circle cx="673.1" cy="112.0" r="0.5"/><circle cx="663.8" cy="127.8" r="0.8"/><circle cx="667.0" cy="114.3" r="0.5"/><circle cx="651.6" cy="107.4" r="0.7"/><circle cx="665.4" cy="117.8" r="1.1"/><circle cx="660.2" cy="112.0" r="0.6"/><circle cx="662.0" cy="116.3" r="1.0"/><circle cx="663.9" cy="121.9" r="0.8"/><circle cx="664.1" cy="124.1" r="0.6"/><circle cx="657.8" cy="112.7" r="0.8"/><circle cx="661.3" cy="119.6" r="1.1"/><circle cx="662.0" cy="110.2" r="1.0"/><circle cx="661.7" cy="120.8" r="1.0"/><circle cx="658.0" cy="112.9" r="1.1"/><circle cx="661.2" cy="119.5" r="1.0"/><circle cx="657.2" cy="119.4" r="0.5"/><circle cx="667.8" cy="119.3" r="0.6"/><circle cx="654.6" cy="111.6" r="0.8"/><circle cx="667.8" cy="113.2" r="0.8"/><circle cx="663.0" cy="112.2" r="0.6"/><circle cx="670.8" cy="109.0" r="0.6"/><circle cx="664.2" cy="124.1" r="1.1"/><circle cx="665.6" cy="128.9" r="1.0"/><circle cx="654.2" cy="111.2" r="0.6"/><circle cx="660.8" cy="124.3" r="0.7"/><circle cx="664.2" cy="107.8" r="0.7"/><circle cx="665.0" cy="123.5" r="0.5"/><circle cx="661.2" cy="122.6" r="1.0"/><circle cx="655.7" cy="111.8" r="1.1"/><circle cx="660.4" cy="116.1" r="0.7"/><circle cx="657.7" cy="115.7" r="0.6"/><circle cx="653.8" cy="120.7" r="0.6"/><circle cx="650.5" cy="124.6" r="1.1"/><circle cx="654.1" cy="107.3" r="0.9"/><circle cx="661.2" cy="116.2" r="0.5"/><circle cx="669.2" cy="110.0" r="1.1"/><circle cx="669.9" cy="116.1" r="0.8"/><circle cx="669.6" cy="96.5" r="1.0"/><circle cx="674.5" cy="102.3" r="0.9"/><circle cx="675.3" cy="96.2" r="0.9"/><circle cx="672.4" cy="91.4" r="0.7"/><circle cx="666.6" cy="92.1" r="0.9"/><circle cx="663.9" cy="103.5" r="0.9"/><circle cx="665.0" cy="97.5" r="0.7"/><circle cx="665.2" cy="97.3" r="0.5"/><circle cx="661.9" cy="90.3" r="0.9"/><circle cx="669.5" cy="96.1" r="0.9"/></g>
  <ellipse cx="679" cy="254" rx="4" ry="7" fill="#f4f0ea"/>
  <!-- left dark edge -->
  <rect x="493" y="52" width="2.5" height="526" fill="#5a3c26" opacity=".7"/>
  <!-- rock -->
  <path d="M493 458 L498 462 L504 488 L509 526 L503 544 L493 552 Z" fill="#7b5238"/>
  <path d="M493 578 L493 560 L510 550 L526 540 L533 548 L518 566 L510 578 Z" fill="#7e5439"/>
  <path d="M529 541 L537 537 L543 552 L540 567 L532 560 Z" fill="#56382a" filter="url(#bl)" opacity=".85"/>
  <path d="M552 568 L566 562 L574 578 L550 578 Z" fill="#5e3e2b" filter="url(#bl)" opacity=".9"/>
  <path d="M526 502 L532 498 L537 508 L530 513 Z" fill="#5a3a28" filter="url(#bl)" opacity=".8"/>
</svg>
<div class="a" style="left:506px;top:455.5px;width:171px;height:123px;background:rgba(100,64,36,.26)"></div>

<!-- chat -->
<div class="a chat" style="top:458.4px">[17:23:16] [English] <b>Killapug</b>: Let the d</div>
<div class="a chat" style="top:470.9px">[17:23:17] [English] <b>Qego</b>: guys</div>
<div class="a chat" style="top:483.4px">[17:23:26] [English] <b>Qego</b>: u know the</div>
<div class="a chat" style="top:495.6px">[17:23:26] [English] <b>Buuddhaa</b>: got it</div>
<div class="a chat" style="top:508.1px">[17:23:50] [English] <b>Otung</b>: What do i</div>
<div class="a chat" style="top:521px">beginners gear?&nbsp; Can I vendor it?</div>
<div class="a chat" style="top:533.9px">[17:23:53] [English] <b>Kingzagun</b>: go aw</div>
<div class="a chat" style="top:545.6px">[17:24:09] [English] <b>Beonthebeard</b>: sa</div>
<div class="a chat" style="top:558.4px">]</div>
<div class="a chat" style="top:570.5px">[17:24:18] [English] <b>Brendensouls</b>: Hi</div>

<!-- nautilus window -->
<div id="win" class="a">
  <div id="hdr" class="a">
    <div class="a btn" style="left:4.4px;top:4.4px;width:46.2px;height:21px"></div>
    <div class="a" style="left:26.9px;top:5.4px;width:1px;height:19px;background:#e0e0e0"></div>
    <svg style="left:13px;top:10.5px" width="6" height="10" viewBox="0 0 6 10"><path d="M4.6 0.6 L1.4 4.8 L4.6 9" fill="none" stroke="#5a5a5a" stroke-width=".95"/></svg>
    <svg style="left:35.5px;top:10.5px" width="6" height="10" viewBox="0 0 6 10"><path d="M1.4 0.6 L4.6 4.8 L1.4 9" fill="none" stroke="#8a8a8a" stroke-width=".95"/></svg>
    <div class="a btn" style="left:55.4px;top:4.4px;width:297.4px;height:21px"></div>
    <div class="a" style="left:329.9px;top:5.4px;width:1px;height:19px;background:#e0e0e0"></div>
    <svg style="left:62px;top:10.3px" width="10" height="10" viewBox="0 0 10 10"><path d="M1 5 L5 1 L9 5 M2 4 V9.2 H4.2 V6.3 H5.8 V9.2 H8 V4" fill="none" stroke="#777" stroke-width="1"/></svg>
    <div class="a" style="left:76.4px;top:9px;font-size:9.6px;font-weight:bold;color:#8a8a8a;line-height:12px;white-space:nowrap">Home</div>
    <div class="a" style="left:110.5px;top:9px;font-size:9.6px;color:#8a8a8a;line-height:12px">/</div>
    <div class="a" style="left:120.2px;top:9px;font-size:9.6px;font-weight:bold;color:#8a8a8a;line-height:12px;white-space:nowrap">Downloads</div>
    <div class="a" style="left:177.5px;top:9px;font-size:9.6px;color:#8a8a8a;line-height:12px">/</div>
    <div class="a" style="left:187.5px;top:9px;font-size:9.6px;font-weight:bold;color:#333;line-height:12px;white-space:nowrap">nodeProject</div>
    <svg style="left:339.5px;top:11.3px" width="3" height="8" viewBox="0 0 3 8"><circle cx="1.5" cy="1.2" r=".9" fill="#444"/><circle cx="1.5" cy="4" r=".9" fill="#444"/><circle cx="1.5" cy="6.8" r=".9" fill="#444"/></svg>
    <div class="a btn" style="left:358.2px;top:4.4px;width:22.2px;height:21px"></div>
    <svg style="left:364.5px;top:10.2px" width="10" height="10" viewBox="0 0 10 10"><circle cx="4.2" cy="4.2" r="3.3" fill="none" stroke="#444" stroke-width="1.1"/><path d="M6.6 6.6 L9.2 9.2" stroke="#444" stroke-width="1.2"/></svg>
    <div class="a btn" style="left:433.1px;top:4.4px;width:39.6px;height:21px"></div>
    <div class="a" style="left:456px;top:5.4px;width:1px;height:19px;background:#e0e0e0"></div>
    <svg style="left:440.2px;top:11.2px" width="9" height="7" viewBox="0 0 9 7"><path d="M0 .6 H2.4 M0 3.4 H2.4 M0 6.2 H2.4" stroke="#2a2a2a" stroke-width="1.3"/><path d="M3.4 .6 H8.8 M3.4 3.4 H8.8 M3.4 6.2 H8.8" stroke="#4a4a4a" stroke-width=".9"/></svg>
    <svg style="left:461.3px;top:13px" width="7" height="5" viewBox="0 0 7 5"><path d="M0.7 0.8 L3.5 3.8 L6.3 0.8" fill="none" stroke="#555" stroke-width="1"/></svg>
    <div class="a btn" style="left:477.5px;top:4.4px;width:23px;height:21px"></div>
    <svg style="left:485.5px;top:11.3px" width="7" height="7" viewBox="0 0 7 7"><path d="M0 .6 H7 M0 3.4 H7 M0 6.2 H7" stroke="#4a4a4a" stroke-width=".9"/></svg>
    <div class="a circ" style="left:513.6px"></div>
    <div class="a" style="left:517.8px;top:16.2px;width:6.6px;height:1.4px;background:#333"></div>
    <div class="a circ" style="left:540px"></div>
    <div class="a" style="left:544.5px;top:12px;width:6px;height:6px;border:1px solid #3a3a3a"></div>
    <div class="a circ" style="left:566.3px"></div>
    <svg style="left:570.6px;top:11.8px" width="7" height="7" viewBox="0 0 7 7"><path d="M.8 .8 L6.2 6.2 M6.2 .8 L.8 6.2" stroke="#3a3a3a" stroke-width="1"/></svg>
  </div>
  <div id="side" class="a">
    <svg style="left:9.5px;top:9.7px" width="10" height="10" viewBox="0 0 10 10"><path d="M2.2 2.6 A4.4 4.4 0 1 1 0.8 5.6" fill="none" stroke="#444" stroke-width="1.05"/><path d="M0.6 1.2 V3.6 H3" fill="none" stroke="#444" stroke-width="1.05"/><path d="M5.2 2.8 V5.4 L6.8 6.6" fill="none" stroke="#444" stroke-width="1.05"/></svg>
    <svg style="left:9.5px;top:34.3px" width="10" height="10" viewBox="0 0 10 10"><path d="M5 0.4 L6.3 3.6 L9.7 3.8 L7.1 6 L7.9 9.4 L5 7.5 L2.1 9.4 L2.9 6 L0.3 3.8 L3.7 3.6 Z" fill="#3c3c3c"/></svg>
    <svg style="left:9.5px;top:59.3px" width="10" height="10" viewBox="0 0 10 10"><path d="M0.6 5.2 L5 0.9 L9.4 5.2 M1.8 4.2 V9.4 H8.2 V4.2" fill="none" stroke="#444" stroke-width="1.05"/><rect x="5.6" y="6.2" width="1.6" height="3.2" fill="#444"/></svg>
    <svg style="left:9.5px;top:84.8px" width="10" height="10" viewBox="0 0 10 10"><path d="M1.3 0.6 H6.4 L8.8 3 V9.4 H1.3 Z" fill="none" stroke="#444" stroke-width="1.05"/><path d="M3 5.4 H7 M3 7.3 H7" stroke="#444" stroke-width="1.2"/></svg>
    <svg style="left:9.5px;top:109.8px" width="10" height="10" viewBox="0 0 10 10"><path d="M5 0.5 V6.5 M2.6 4.2 L5 6.6 L7.4 4.2 M3.8 0.5 H6.2" fill="none" stroke="#444" stroke-width="1.05"/><path d="M1.5 9.2 H8.5" stroke="#777" stroke-width="1"/></svg>
    <svg style="left:9.5px;top:134.8px" width="10" height="10" viewBox="0 0 10 10"><path d="M3 8.2 V1.2 L8.8 0.6 V7.4" fill="none" stroke="#333" stroke-width="1.3"/><ellipse cx="2" cy="8.4" rx="1.6" ry="1.2" fill="#333"/><ellipse cx="7.6" cy="7.7" rx="1.6" ry="1.2" fill="#333"/></svg>
    <svg style="left:9.5px;top:159.8px" width="10" height="10" viewBox="0 0 10 10"><rect x="0.6" y="1.2" width="8.8" height="7.8" fill="none" stroke="#444" stroke-width="1.05"/><path d="M1.4 8.4 L4 5.4 L6 7.2 L7.4 6 L8.8 7.6 V8.5 H1.4Z" fill="#444"/><circle cx="6.8" cy="3.4" r=".8" fill="#444"/></svg>
    <svg style="left:9.5px;top:185.3px" width="10" height="10" viewBox="0 0 10 10"><rect x="0.6" y="0.8" width="8.8" height="8.4" fill="none" stroke="#444" stroke-width="1.05"/><path d="M2.6 0.8 V9.2 M7.4 0.8 V9.2 M0.6 5 H9.4" fill="none" stroke="#444" stroke-width="1.05"/></svg>
    <svg style="left:9.5px;top:210.3px" width="10" height="10" viewBox="0 0 10 10"><path d="M1.4 2.6 H7.8 M3.4 2.6 V1 H5.8 V2.6 M2.1 2.6 V9.4 H5.4 M7.1 2.6 V5.2" fill="none" stroke="#444" stroke-width="1.05"/><circle cx="7.4" cy="7.6" r="1.8" fill="none" stroke="#444" stroke-width="1.05"/><path d="M3.6 4.6 V7.6" fill="none" stroke="#444" stroke-width="1.05"/></svg>
    <svg style="left:9.5px;top:241.8px" width="10" height="10" viewBox="0 0 10 10"><path d="M5 1 V9 M1 5 H9" stroke="#444" stroke-width="1.1"/></svg>
    <div class="a si" style="top:8.9px">Recent</div>
    <div class="a si" style="top:34px">Starred</div>
    <div class="a si" style="top:59px">Home</div>
    <div class="a si" style="top:84.4px">Documents</div>
    <div class="a si" style="top:109.4px">Downloads</div>
    <div class="a si" style="top:134.4px">Music</div>
    <div class="a si" style="top:159.4px">Pictures</div>
    <div class="a si" style="top:184.9px">Videos</div>
    <div class="a si" style="top:209.9px">Trash</div>
    <div class="a" style="left:0;top:231.6px;width:125px;height:1px;background:#e4e4e4"></div>
    <div class="a si" style="top:241.4px">Other Locations</div>
  </div>
  <div class="a" style="left:125px;top:31px;width:464px;height:333px;background:#fff"></div>
  <svg style="left:142.8px;top:37.2px" width="31" height="28" viewBox="0 0 31 28">
    <defs><linearGradient id="ft158" x1="0" x2="1"><stop offset="0" stop-color="#9b2d5c"/><stop offset=".55" stop-color="#b83a4e"/><stop offset="1" stop-color="#e8642e"/></linearGradient></defs>
    <path d="M0 3 Q0 0 2.5 0 H12 Q13.2 0 14 1 L15.2 2.2 H28.5 Q31 2.2 31 4.5 V10 H0 Z" fill="url(#ft158)"/>
    <rect x="0" y="5.6" width="31" height="21.8" rx="2.4" fill="#717171"/>
    <rect x="0" y="5.6" width="31" height="1.2" fill="#7d7d7d"/>
  </svg>
  <div class="a lbl" style="left:123.2px;top:67.7px">images</div>
  <svg style="left:205.4px;top:37.2px" width="31" height="28" viewBox="0 0 31 28">
    <defs><linearGradient id="ft220" x1="0" x2="1"><stop offset="0" stop-color="#9b2d5c"/><stop offset=".55" stop-color="#b83a4e"/><stop offset="1" stop-color="#e8642e"/></linearGradient></defs>
    <path d="M0 3 Q0 0 2.5 0 H12 Q13.2 0 14 1 L15.2 2.2 H28.5 Q31 2.2 31 4.5 V10 H0 Z" fill="url(#ft220)"/>
    <rect x="0" y="5.6" width="31" height="21.8" rx="2.4" fill="#717171"/>
    <rect x="0" y="5.6" width="31" height="1.2" fill="#7d7d7d"/>
  </svg>
  <div class="a lbl" style="left:185.8px;top:67.7px">scripts</div>
  <svg style="left:268.0px;top:37.2px" width="31" height="28" viewBox="0 0 31 28">
    <defs><linearGradient id="ft283" x1="0" x2="1"><stop offset="0" stop-color="#9b2d5c"/><stop offset=".55" stop-color="#b83a4e"/><stop offset="1" stop-color="#e8642e"/></linearGradient></defs>
    <path d="M0 3 Q0 0 2.5 0 H12 Q13.2 0 14 1 L15.2 2.2 H28.5 Q31 2.2 31 4.5 V10 H0 Z" fill="url(#ft283)"/>
    <rect x="0" y="5.6" width="31" height="21.8" rx="2.4" fill="#717171"/>
    <rect x="0" y="5.6" width="31" height="1.2" fill="#7d7d7d"/>
  </svg>
  <div class="a lbl" style="left:248.4px;top:67.7px">views</div>
  <svg style="left:332.8px;top:35.3px" width="26" height="31" viewBox="0 0 26 31">
    <path d="M3 .5 H19 L25.5 7 V28 Q25.5 30.5 23 30.5 H3 Q.5 30.5 .5 28 V3 Q.5 .5 3 .5 Z" fill="#f6f6f6" stroke="#d6d6d6" stroke-width="1"/>
    <path d="M19 .5 V5 Q19 7 21 7 H25.5" fill="#ececec" stroke="#dadada" stroke-width=".9"/>
    <text x="14" y="23.6" font-family="Liberation Sans" font-weight="bold" font-size="13.6" fill="#e9c23f" text-anchor="middle" letter-spacing="-.3">JS</text>
  </svg>
  <div class="a lbl" style="left:311.0px;top:67.7px">app.js</div>
  <svg style="left:395.4px;top:35.3px" width="26" height="31" viewBox="0 0 26 31">
    <path d="M3 .5 H19 L25.5 7 V28 Q25.5 30.5 23 30.5 H3 Q.5 30.5 .5 28 V3 Q.5 .5 3 .5 Z" fill="#f6f6f6" stroke="#d6d6d6" stroke-width="1"/>
    <path d="M19 .5 V5 Q19 7 21 7 H25.5" fill="#ececec" stroke="#dadada" stroke-width=".9"/>
    <defs><linearGradient id="rg" x1="0" y1=".2" x2="1" y2=".8"><stop offset="0" stop-color="#5c5c5c"/><stop offset=".45" stop-color="#8a8a8a"/><stop offset=".7" stop-color="#4a4a4a"/><stop offset="1" stop-color="#a8a8a8"/></linearGradient><radialGradient id="rh"><stop offset="0" stop-color="#f2f2f2"/><stop offset=".7" stop-color="#dcdcdc"/><stop offset="1" stop-color="#b0b0b0"/></radialGradient></defs><circle cx="12.8" cy="18.4" r="7.7" fill="url(#rg)"/><ellipse cx="12.8" cy="18.6" rx="3.2" ry="4.2" fill="url(#rh)"/>
  </svg>
  <div class="a lbl" style="left:373.6px;top:67.7px">package.<br>json</div>
  <svg style="left:458.0px;top:35.3px" width="26" height="31" viewBox="0 0 26 31">
    <path d="M3 .5 H19 L25.5 7 V28 Q25.5 30.5 23 30.5 H3 Q.5 30.5 .5 28 V3 Q.5 .5 3 .5 Z" fill="#f6f6f6" stroke="#d6d6d6" stroke-width="1"/>
    <path d="M19 .5 V5 Q19 7 21 7 H25.5" fill="#ececec" stroke="#dadada" stroke-width=".9"/>
    <defs><linearGradient id="rg" x1="0" y1=".2" x2="1" y2=".8"><stop offset="0" stop-color="#5c5c5c"/><stop offset=".45" stop-color="#8a8a8a"/><stop offset=".7" stop-color="#4a4a4a"/><stop offset="1" stop-color="#a8a8a8"/></linearGradient><radialGradient id="rh"><stop offset="0" stop-color="#f2f2f2"/><stop offset=".7" stop-color="#dcdcdc"/><stop offset="1" stop-color="#b0b0b0"/></radialGradient></defs><circle cx="12.8" cy="18.4" r="7.7" fill="url(#rg)"/><ellipse cx="12.8" cy="18.6" rx="3.2" ry="4.2" fill="url(#rh)"/>
  </svg>
  <div class="a lbl" style="left:436.2px;top:67.7px">package-<br>lock.json</div>
  <svg style="left:520.6px;top:35.3px" width="26" height="31" viewBox="0 0 26 31">
    <path d="M3 .5 H19 L25.5 7 V28 Q25.5 30.5 23 30.5 H3 Q.5 30.5 .5 28 V3 Q.5 .5 3 .5 Z" fill="#f6f6f6" stroke="#d6d6d6" stroke-width="1"/>
    <path d="M19 .5 V5 Q19 7 21 7 H25.5" fill="#ececec" stroke="#dadada" stroke-width=".9"/>
    <rect x="5.2" y="14.2" width="15.6" height="9" rx=".6" fill="#fafafa" stroke="#727272" stroke-width="1.4"/><path d="M7.7 21 V16.4 L9.7 18.8 L11.7 16.4 V21" fill="none" stroke="#686868" stroke-width="1.3"/><path d="M16 16 V21 M14.1 19 L16 21 L17.9 19" fill="none" stroke="#686868" stroke-width="1.2"/>
  </svg>
  <div class="a lbl" style="left:498.8px;top:67.7px">README.<br>md</div>
  <svg style="left:511.5px;top:62px" width="9" height="12" viewBox="0 0 9 12"><path d="M.5 .5 V10 L2.8 7.8 L4.6 11.5 L6 10.8 L4.3 7.2 H7.6 Z" fill="#1a1a1a" stroke="#fff" stroke-width=".6"/></svg>
  <div class="a" style="left:401.4px;top:348.7px;width:200px;height:24px;background:#f7f7f7;border:1px solid #dedede;border-radius:6px"></div>
  <div class="a" style="left:410.8px;top:350.2px;font-size:9.8px;color:#2a2a2a;-webkit-text-stroke:.12px #2a2a2a;line-height:12px;white-space:nowrap">"images" selected&nbsp; (containing 2 items)</div>
</div>
</body></html>
